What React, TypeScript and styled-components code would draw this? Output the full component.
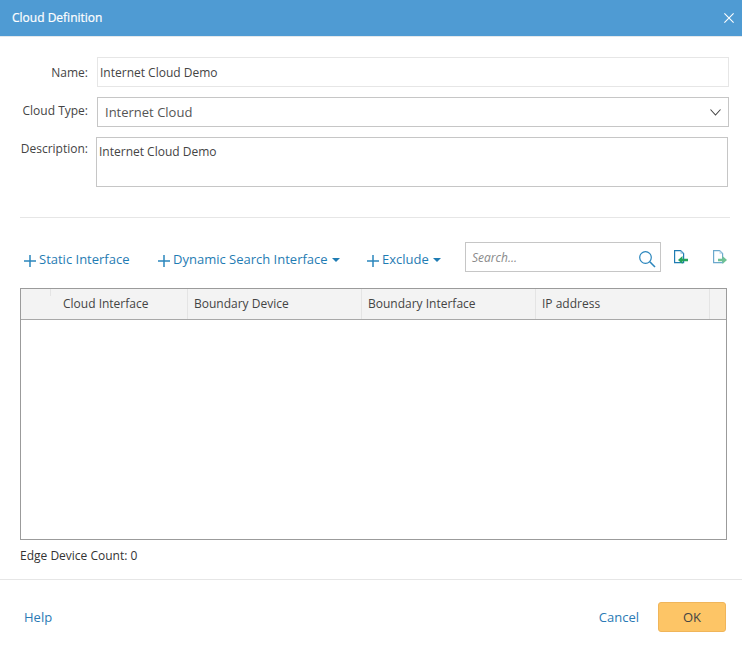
import styled, { createGlobalStyle } from 'styled-components';

const GlobalStyle = createGlobalStyle`
  html, body {
    margin: 0;
    padding: 0;
    background: #fff;
  }
  * {
    box-sizing: border-box;
  }
`;

const Dialog = styled.div`
  width: 742px;
  height: 652px;
  display: flex;
  flex-direction: column;
  overflow: hidden;
  font-family: 'Open Sans', sans-serif;
  font-size: 12px;
  color: #333;
`;

const Header = styled.div`
  flex: none;
  height: 37px;
  padding: 0 8px 2px 12px;
  display: flex;
  align-items: center;
  justify-content: space-between;
  background: #4f9bd3;
  border-bottom: 1px solid #e3e8ec;
`;

const Title = styled.div`
  font-size: 12px;
  font-weight: 400;
  color: #fff;
  -webkit-text-stroke: 0.2px #fff;
`;

const CloseIcon = styled.svg`
  display: block;
  width: 10px;
  height: 10px;
  margin-top: 1px;
`;

const Form = styled.div`
  padding: 20px 13px 0 0;
`;

const Row = styled.div<{ $gap?: number; $left?: number }>`
  display: flex;
  margin-bottom: ${({ $gap }) => $gap ?? 10}px;
  margin-left: ${({ $left }) => $left ?? 97}px;
  position: relative;
`;

const Label = styled.label<{ $top: number; $right: number }>`
  position: absolute;
  right: 100%;
  top: ${({ $top }) => $top}px;
  margin-right: ${({ $right }) => $right}px;
  white-space: nowrap;
  font-size: 12px;
  line-height: 16px;
  color: #444;
`;

const NameField = styled.div`
  flex: 1;
  height: 30px;
  padding: 1px 0 0 2px;
  border: 1px solid #e6e6e6;
  font-size: 12px;
  line-height: 28px;
  color: #444;
`;

const SelectField = styled.div`
  flex: 1;
  height: 30px;
  padding: 0 7px;
  display: flex;
  align-items: center;
  justify-content: space-between;
  border: 1px solid #c6c6c6;
  font-size: 13px;
  color: #555;
`;

const Chevron = styled.svg`
  display: block;
  width: 11px;
  height: 7px;
`;

const DescriptionField = styled.div`
  flex: 1;
  height: 50px;
  margin-right: 1px;
  padding: 6px 2px;
  border: 1px solid #c6c6c6;
  font-size: 12px;
  line-height: 16px;
  color: #444;
`;

const Separator = styled.div`
  height: 1px;
  margin: 30px 12px 0 20px;
  background: #e6e6e6;
`;

const Toolbar = styled.div`
  height: 30px;
  margin: 24px 0 16px;
  padding-left: 24px;
  display: flex;
  align-items: center;
`;

const ActionLink = styled.a<{ $width: number }>`
  width: ${({ $width }) => $width}px;
  flex: none;
  margin-top: 4px;
  display: flex;
  align-items: center;
  font-size: 13px;
  color: #1f7cb3;
  white-space: nowrap;
  cursor: pointer;
`;

const PlusIcon = styled.svg`
  display: block;
  flex: none;
  width: 12px;
  height: 12px;
  margin: 3px 3px 0 0;
`;

const Caret = styled.span`
  width: 0;
  height: 0;
  margin: 2px 0 0 4px;
  border-left: 4px solid transparent;
  border-right: 4px solid transparent;
  border-top: 4px solid #1f7cb3;
`;

const SearchBox = styled.div`
  width: 196px;
  height: 30px;
  flex: none;
  padding: 0 4px 0 6px;
  display: flex;
  align-items: center;
  justify-content: space-between;
  border: 1px solid #c6c6c6;
  font-size: 12px;
  font-style: italic;
  color: #8a8a8a;
`;

const SearchIcon = styled.svg`
  display: block;
  width: 18px;
  height: 18px;
  margin-top: 3px;
`;

const FileIcon = styled.svg<{ $left: number }>`
  display: block;
  flex: none;
  width: 14px;
  height: 14px;
  margin-left: ${({ $left }) => $left}px;
`;

const Table = styled.div`
  height: 252px;
  margin: 0 15px 0 20px;
  border: 1px solid #9b9b9b;
`;

const TableHead = styled.div`
  height: 31px;
  display: grid;
  grid-template-columns: 30px 137px 174px 174px 174px 1fr;
  background: #f3f3f3;
  border-bottom: 1px solid #a8a8a8;
`;

const HeadCell = styled.div`
  padding-left: 6px;
  border-right: 1px solid #e4e4e4;
  font-size: 12px;
  line-height: 30px;
  color: #444;
  &:first-child {
    padding: 0;
    height: 7px;
  }
  &:nth-child(2) {
    padding-left: 12px;
  }
  &:last-child {
    border-right: none;
  }
`;

const Count = styled.div`
  margin: 8px 0 0 20px;
  font-size: 12px;
  line-height: 16px;
  color: #333;
`;

const Footer = styled.div`
  margin-top: 15px;
  padding: 22px 16px 0 24px;
  display: flex;
  align-items: center;
  justify-content: space-between;
  border-top: 1px solid #e6e6e6;
`;

const FooterLink = styled.a`
  font-size: 13px;
  color: #2a7ab5;
  cursor: pointer;
`;

const FooterActions = styled.div`
  display: flex;
  align-items: center;
  gap: 19px;
`;

const OkButton = styled.button`
  width: 68px;
  height: 30px;
  padding: 0;
  border: 1px solid #f0b55a;
  border-radius: 3px;
  background: #fdc566;
  font-family: inherit;
  font-size: 13px;
  color: #444;
`;

const Plus = () => (
  <PlusIcon viewBox="0 0 12 12">
    <path d="M6 0v12M0 6h12" stroke="#2b86bd" strokeWidth="1.5" fill="none" />
  </PlusIcon>
);

const FileArrow = ({ left, faded, flip }: { left: number; faded?: boolean; flip?: boolean }) => (
  <FileIcon $left={left} viewBox="0 0 14 14" opacity={faded ? 0.65 : 1}>
    <path d="M0.6 0.6h6l3 3v9h-9z" fill="#fff" stroke="#1f7cb3" strokeWidth="1.2" />
    <path d="M6.5 0.6v3.2h3.1z" fill="#9cc6e2" />
    <path
      d={flip ? 'M5 8.8h4.5v-2.8l4.5 4-4.5 4v-2.8h-4.5z' : 'M14 8.8h-5.5v-2.8l-4.5 4 4.5 4v-2.8h5.5z'}
      fill="#23a35c"
    />
  </FileIcon>
);

export default function App() {
  const columns = ['', 'Cloud Interface', 'Boundary Device', 'Boundary Interface', 'IP address', ''];

  return (
    <>
      <GlobalStyle />
      <Dialog>
        <Header>
          <Title>Cloud Definition</Title>
          <CloseIcon viewBox="0 0 10 10">
            <path d="M0.4 0.4l9.2 9.2M9.6 0.4l-9.2 9.2" stroke="#fff" strokeWidth="1.1" fill="none" />
          </CloseIcon>
        </Header>
        <Form>
          <Row>
            <Label $top={8} $right={9}>Name:</Label>
            <NameField>Internet Cloud Demo</NameField>
          </Row>
          <Row>
            <Label $top={6} $right={9}>Cloud Type:</Label>
            <SelectField>
              Internet Cloud
              <Chevron viewBox="0 0 11 7">
                <path d="M0.5 0.5l5 5.5 5-5.5" stroke="#444" strokeWidth="1.1" fill="none" />
              </Chevron>
            </SelectField>
          </Row>
          <Row $gap={0} $left={96}>
            <Label $top={4} $right={8}>Description:</Label>
            <DescriptionField>Internet Cloud Demo</DescriptionField>
          </Row>
        </Form>
        <Separator />
        <Toolbar>
          <ActionLink $width={134}><Plus />Static Interface</ActionLink>
          <ActionLink $width={209}><Plus />Dynamic Search Interface<Caret /></ActionLink>
          <ActionLink $width={98}><Plus />Exclude<Caret /></ActionLink>
          <SearchBox>
            Search...
            <SearchIcon viewBox="0 0 18 18">
              <circle cx="7.5" cy="7.5" r="5.8" stroke="#2b86bd" strokeWidth="1.2" fill="none" />
              <path d="M11.8 11.8l5.2 5.2" stroke="#2b86bd" strokeWidth="1.6" fill="none" />
            </SearchIcon>
          </SearchBox>
          <FileArrow left={13} />
          <FileArrow left={25} faded flip />
        </Toolbar>
        <Table>
          <TableHead>
            {columns.map((column, index) => (
              <HeadCell key={index}>{column}</HeadCell>
            ))}
          </TableHead>
        </Table>
        <Count>Edge Device Count: 0</Count>
        <Footer>
          <FooterLink>Help</FooterLink>
          <FooterActions>
            <FooterLink>Cancel</FooterLink>
            <OkButton>OK</OkButton>
          </FooterActions>
        </Footer>
      </Dialog>
    </>
  );
}
